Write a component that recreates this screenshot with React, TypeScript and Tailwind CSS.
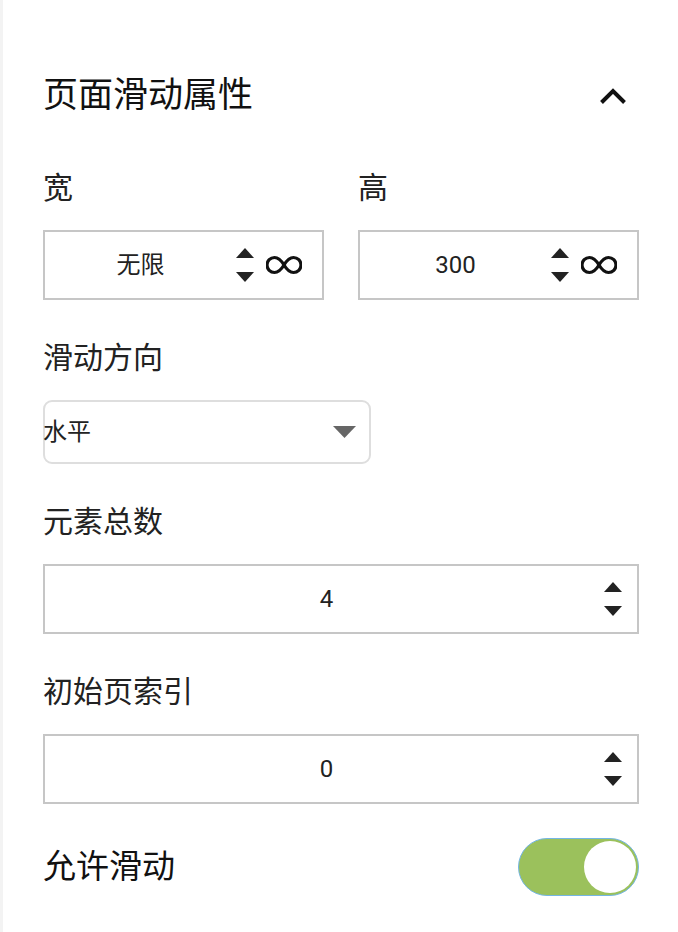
import React, { useState } from "react";

const Spinner = () => (
  <div className="flex flex-col items-center gap-[14px]">
    <svg width="18" height="10" viewBox="0 0 18 10">
      <polygon points="9,0 18,10 0,10" fill="#222" />
    </svg>
    <svg width="18" height="10" viewBox="0 0 18 10">
      <polygon points="0,0 18,0 9,10" fill="#222" />
    </svg>
  </div>
);

const Infinity = () => (
  <svg width="36" height="20" viewBox="0 0 36 20">
    <path
      d="M18 10 C15 5, 11.5 2.5, 8.5 2.5 A7.5 7.5 0 0 0 8.5 17.5 C11.5 17.5, 15 15, 18 10 C21 5, 24.5 2.5, 27.5 2.5 A7.5 7.5 0 0 1 27.5 17.5 C24.5 17.5, 21 15, 18 10 Z"
      fill="none"
      stroke="#111"
      strokeWidth="3.2"
    />
  </svg>
);

const SizeBox = ({ value }: { value: string }) => (
  <div className="w-full h-[70px] border-2 border-[#c6c6c6] flex items-center pr-[20px]">
    <div className="flex-1 text-center text-[24px] text-[#222]">{value}</div>
    <Spinner />
    <div className="ml-[12px]">
      <Infinity />
    </div>
  </div>
);

const NumberBox = ({ value }: { value: string }) => (
  <div className="h-[70px] border-2 border-[#c6c6c6] flex items-center pr-[15px]">
    <div className="flex-1 text-center text-[24px] text-[#222] pl-[4px]">{value}</div>
    <Spinner />
  </div>
);

const Label = ({ children }: { children: React.ReactNode }) => (
  <div className="h-[40px] flex items-center text-[30px] text-[#222] mb-[23px]">{children}</div>
);

export default function App() {
  const [enabled, setEnabled] = useState(true);

  return (
    <div
      className="min-h-[932px] w-[678px] bg-white flex"
      style={{ fontFamily: 'Roboto, "Noto Sans CJK SC", sans-serif' }}
    >
      <div className="w-[3px] bg-[#f3f3f3]" />
      <div className="flex-1 pl-[40px] pr-[39px] pt-[72px]">
        <div className="h-[48px] flex items-center justify-between">
          <span className="text-[35px] text-[#111]">页面滑动属性</span>
          <svg width="28" height="18" viewBox="0 0 28 18" className="mr-[12px]">
            <polyline points="2.5,15.5 14,4 25.5,15.5" fill="none" stroke="#111" strokeWidth="4" />
          </svg>
        </div>

        <div className="flex gap-[34px] mt-[47px]">
          <div className="flex-1 flex flex-col">
            <Label>宽</Label>
            <SizeBox value="无限" />
          </div>
          <div className="flex-1 flex flex-col">
            <Label>高</Label>
            <SizeBox value="300" />
          </div>
        </div>

        <div className="mt-[37px]">
          <Label>滑动方向</Label>
          <div className="w-[328px] h-[64px] border-2 border-[#dedede] rounded-[9px] flex items-center justify-between pr-[13px]">
            <span className="text-[24px] text-[#222] -ml-[2px]">水平</span>
            <svg width="23" height="12" viewBox="0 0 23 12">
              <polygon points="0,0 23,0 11.5,12" fill="#666" />
            </svg>
          </div>
        </div>

        <div className="mt-[37px]">
          <Label>元素总数</Label>
          <NumberBox value="4" />
        </div>

        <div className="mt-[37px]">
          <Label>初始页索引</Label>
          <NumberBox value="0" />
        </div>

        <div className="mt-[34px] h-[58px] flex items-center justify-between">
          <span className="text-[33px] text-[#111]">允许滑动</span>
          <button
            onClick={() => setEnabled(!enabled)}
            className={`w-[121px] h-[58px] rounded-full border-[1.5px] border-[#74b6e4] flex items-center px-[2px] ${
              enabled ? "bg-[#9bc15c] justify-end" : "bg-[#ddd] justify-start"
            }`}
          >
            <span className="w-[52px] h-[52px] rounded-full bg-white block" />
          </button>
        </div>
      </div>
    </div>
  );
}
